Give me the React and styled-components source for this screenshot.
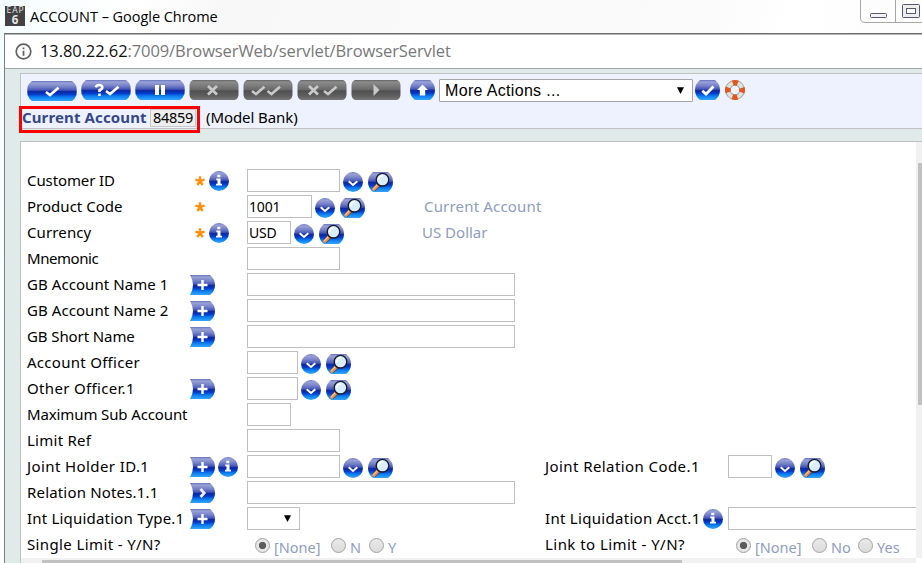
import React from "react";
import styled, { createGlobalStyle } from "styled-components";

const Global = createGlobalStyle`
  * { box-sizing: border-box; }
  html, body { margin: 0; padding: 0; overflow: hidden; }
  svg { display: block; flex: none; }
`;

const Window = styled.div`
  width: 922px;
  height: 563px;
  overflow: hidden;
  display: flex;
  flex-direction: column;
  background: linear-gradient(100deg, #f5fdfe 0, #ffffff 13%, #f8f8f8 22%, #fbfbfb 70%, #ffffff 78%, #fafafa 100%);
  font-family: "Noto Sans", "Open Sans", sans-serif;
  font-size: 15px;
  color: #000;
`;

const TitleBar = styled.header`
  height: 33px;
  flex: none;
  display: flex;
  align-items: flex-start;
  padding-left: 5px;
`;

const AppIcon = styled.div`
  width: 20px;
  height: 20px;
  margin-top: 6px;
  background: #424242;
  color: #e6e6e6;
  display: flex;
  flex-direction: column;
  align-items: center;
  font: 400 8.5px/8px "Open Sans", sans-serif;
  letter-spacing: 0.9px;
  padding-left: 1px;
`;

const AppIconDigit = styled.span`
  font-size: 11.5px;
  font-weight: 700;
  line-height: 12px;
`;

const Title = styled.div`
  margin: 6px auto 0 5px;
  font: 14.5px/22px "Open Sans", sans-serif;
  letter-spacing: -0.04px;
  white-space: nowrap;
`;

const Frame = styled.div`
  flex: 1;
  min-height: 0;
  margin-left: 4px;
  border-left: 1px solid #7c8080;
  border-top: 1px solid #6e6e6e;
  box-shadow: inset 0 1px 0 #b4b4b4;
  background: #e0eae8;
  display: flex;
  flex-direction: column;
`;

const AddressBar = styled.div`
  height: 34px;
  flex: none;
  margin-top: 1px;
  background: #fff;
  border-bottom: 1px solid #a3a6a6;
  display: flex;
  align-items: center;
  padding-left: 10px;
  gap: 8px;
`;

const Url = styled.div`
  font: 16.5px/24px "Open Sans", sans-serif;
  letter-spacing: -0.09px;
  color: #787878;
  white-space: nowrap;
  margin-bottom: 1px;
  b { font-weight: 400; color: #111; }
`;

const HeaderPanel = styled.section`
  margin: 4px 0 0 15px;
  height: 56px;
  flex: none;
  background: #eef2ff;
  border: solid #bfc1c4;
  border-width: 1px 0 1px 1px;
  display: flex;
  flex-direction: column;
`;

const Toolbar = styled.div`
  height: 33px;
  display: flex;
  align-items: flex-start;
  padding: 6px 0 0 6px;
`;

const ButtonGroup = styled.div`
  display: flex;
  gap: 4px;
  margin-right: 9px;
  & > :first-child { margin-top: 1px; }
`;

const ActionSelect = styled.div`
  width: 254px;
  height: 23px;
  margin: -1px 2px 0 4px;
  background: #fff;
  border: 1px solid #a5a5a5;
  border-radius: 1px;
  display: flex;
  align-items: center;
  justify-content: space-between;
  padding: 0 8px 0 5px;
  font: 16px/20px "Liberation Sans", sans-serif;
  letter-spacing: 0.33px;
`;

const HelpSlot = styled.div`
  margin-left: 5px;
`;

const RecordLine = styled.div`
  display: flex;
  align-items: center;
  height: 22px;
  margin-left: -2px;
`;

const Highlight = styled.div`
  height: 27px;
  width: 181px;
  flex: none;
  border: 3px solid #fa0000;
  display: flex;
  align-items: center;
  margin-top: 4px;
`;

const RecordType = styled.strong`
  width: 128px;
  color: #36488a;
  font-size: 15px;
  letter-spacing: 0.12px;
  line-height: 20px;
  white-space: nowrap;
  margin-top: -4px;
`;

const RecordId = styled.span`
  width: 46px;
  height: 18px;
  background: #eee;
  border: 1px solid #c9c9c9;
  font-size: 14.5px;
  letter-spacing: -0.3px;
  line-height: 15px;
  padding-left: 2px;
  margin-top: -3px;
`;

const Company = styled.span`
  margin: 0 0 0 6px;
  letter-spacing: -0.08px;
  line-height: 20px;
`;

const FormPanel = styled.section`
  margin: 12px 0 0 15px;
  flex: 1;
  min-height: 0;
  border: solid #bfc1c1;
  border-width: 1px 0 0 1px;
  background: #fff;
  display: grid;
  grid-template-columns: 1fr 6px;
  grid-template-rows: 1fr 5px;
`;

const Fields = styled.div`
  padding: 26px 0 0 6px;
  overflow: hidden;
`;

const VScroll = styled.div`
  background: #f1f1f1;
  padding: 21px 0 0 2px;
`;

const VThumb = styled.div`
  height: 242px;
  background: #c1c1c1;
`;

const HScroll = styled.div`
  background: #f1f1f1;
  padding: 2px 0 0 21px;
`;

const HThumb = styled.div`
  width: 640px;
  height: 3px;
  background: #c1c1c1;
`;

const Row = styled.div`
  height: 26px;
  display: grid;
  grid-template-columns: 163px 57px 298px 1fr;
  align-items: start;
`;

const Label = styled.span`
  line-height: 25px;
  white-space: nowrap;
  letter-spacing: ${(p) => p.$track || 0}px;
`;

const Marks = styled.div`
  display: flex;
  gap: 3px;
  padding-top: 3px;
`;

const StarSlot = styled.div`
  width: 16px;
  padding: 5px 0 0 5px;
`;

const Control = styled.div`
  display: flex;
  align-items: flex-start;
`;

const Box = styled.div`
  width: ${(p) => p.$w}px;
  height: 23px;
  flex: none;
  margin-top: 1px;
  border: 1px solid #bfbfbf;
  background: #fff;
  font-size: 14px;
  letter-spacing: -0.15px;
  line-height: 21px;
  padding-left: 1px;
`;

const Picker = styled(Box)`
  display: flex;
  align-items: center;
  justify-content: flex-end;
  padding-right: 8px;
`;

const Tools = styled.div`
  display: flex;
  gap: 5px;
  padding: 4px 0 0 3px;
`;

const Enrichment = styled.span`
  margin-left: ${(p) => p.$gap}px;
  letter-spacing: ${(p) => p.$track}px;
  line-height: 25px;
  color: #8e9dc0;
`;

const Side = styled.div`
  display: grid;
  grid-template-columns: 158px 25px 1fr;
`;

const Radios = styled.div`
  display: flex;
  padding: 5px 0 0 8px;
`;

const Choice = styled.label`
  display: flex;
  gap: 4px;
  width: ${(p) => p.$w}px;
  flex: none;
  color: #8e9dc0;
  font-size: 14.5px;
  line-height: 20px;
  white-space: nowrap;
`;

const Dot = styled.span`
  width: 15px;
  height: 15px;
  margin-top: 1px;
  flex: none;
  border: 1px solid #a2a2a2;
  border-radius: 50%;
  background: ${(p) =>
    p.$on
      ? "radial-gradient(circle, #5b5b5b 0 3.3px, #e6e6e6 4px)"
      : "linear-gradient(#e9e9e9, #dcdcdc)"};
`;

const stops = {
  blue: [["0", "#6573bf"], ["0.1", "#9aa2d6"], ["0.3", "#7480c8"], ["0.46", "#4454b6"], ["0.53", "#0a289f"], ["0.66", "#0538c8"], ["0.8", "#0a7cf0"], ["1", "#35a6fa"]],
  grey: [["0", "#636363"], ["0.1", "#8c8c8c"], ["0.48", "#6a6a6a"], ["0.54", "#505050"], ["0.8", "#5f5f5f"], ["1", "#787878"]],
};

function Shaded({ w, d, tone = "blue", children }) {
  const id = React.useId();
  return (
    <svg width={w} height="20" viewBox={`0 0 ${w} 20`}>
      <defs>
        <linearGradient id={id} x1="0" y1="0" x2="0" y2="20" gradientUnits="userSpaceOnUse">
          {stops[tone].map(([o, c]) => <stop key={o} offset={o} stopColor={c} />)}
        </linearGradient>
      </defs>
      <path d={d} fill={`url(#${id})`} />
      {children}
    </svg>
  );
}

const PILL = "M5 0H45Q48 2 49.5 6Q50 10 49.5 14Q48 18 45 20H5Q2 18 .5 14Q0 10 .5 6Q2 2 5 0Z";
const GREY_PILL = "M4 0H46Q49 1 49.5 5V15Q49 19 46 20H4Q1 19 .5 15V5Q1 1 4 0Z";
const SMALL = "M5 0H20Q25 4 25 10Q25 16 20 20H5Q0 16 0 10Q0 4 5 0Z";
const DISC = "M10 0A10 10 0 0 1 10 20A10 10 0 0 1 10 0Z";
const TAG = "M0 0H20Q25 4 25 10Q25 16 20 20H0Q3 15 3 10Q3 5 0 0Z";

const Tick = ({ x = 18, c = "#fff" }) => (
  <path d={`M${x} 11L${x + 4} 14L${x + 12.5} 6.7`} fill="none" stroke={c} strokeWidth="2.6" />
);
const Cross = ({ x, c = "#c9c9c9" }) => (
  <path d={`M${x} 6L${x + 9} 14.5M${x + 9} 6L${x} 14.5`} stroke={c} strokeWidth="2.8" />
);

const glyphs = {
  commit: <Tick x={19} />,
  validate: (
    <>
      <path d="M14.8 7.4Q15.5 5 18 5Q21.3 5 21.3 7.4Q21.3 9 18.5 10.2V12M18.5 13.5V16" fill="none" stroke="#fff" strokeWidth="2.6" />
      <Tick x={25} />
    </>
  ),
  hold: <path d="M20 5H24V15H20ZM26 5H30V15H26Z" fill="#fff" />,
  remove: <Cross x={19} />,
  authorise: <><Tick x={9} c="#c9c9c9" /><Tick x={24.5} c="#c9c9c9" /></>,
  reverse: <><Cross x={12} /><Tick x={27} c="#c9c9c9" /></>,
  next: <path d="M22.5 4L28.5 10L22.5 16Z" fill="#c9c9c9" />,
};

const Pill = ({ kind, grey }) => (
  <Shaded w={50} d={grey ? GREY_PILL : PILL} tone={grey ? "grey" : "blue"}>{glyphs[kind]}</Shaded>
);
const Up = () => (
  <Shaded w={25} d={SMALL}><path d="M12.5 4.5L18 10H15.2V15.5H9.8V10H7Z" fill="#fff" /></Shaded>
);
const Go = () => (
  <Shaded w={25} d={SMALL}><path d="M7.3 10.8L11 14L18.5 6.4" fill="none" stroke="#fff" strokeWidth="2.8" /></Shaded>
);
const Info = () => (
  <Shaded w={20} d={DISC}>
    <path d="M8.3 3.8H11.3V6.3H8.3ZM7.3 7.6H11.5V12.8H13V14.5H7V12.8H8.5V9.2H7.3Z" fill="#fff" />
  </Shaded>
);
const Drop = () => (
  <Shaded w={20} d={DISC}><path d="M5.7 9.2L10 13L14.3 9.2" fill="none" stroke="#fff" strokeWidth="2" /></Shaded>
);
const Search = () => (
  <Shaded w={25} d={SMALL}>
    <path d="M10.5 12.4L5.5 17.8" stroke="#5a3a28" strokeWidth="4.4" />
    <path d="M9.9 13L5 18.2" stroke="#e8935c" strokeWidth="3.4" />
    <path d="M9.2 12.8L5 17.3" stroke="#ffd0a8" strokeWidth="1" />
    <circle cx="14.5" cy="7.7" r="6.3" fill="#d9edfb" stroke="#171b29" strokeWidth="1.4" />
    <path d="M10.6 8.3Q10.7 4.2 14.9 3.5" stroke="#fff" strokeWidth="1.6" fill="none" />
  </Shaded>
);
const Add = () => (
  <Shaded w={25} d={TAG}><path d="M11.3 5H13.7V8.8H17.5V11.2H13.7V15H11.3V11.2H7.5V8.8H11.3Z" fill="#fff" /></Shaded>
);
const Sub = () => (
  <Shaded w={25} d={TAG}><path d="M10.5 6L14.2 10L10.5 14" fill="none" stroke="#e9edff" strokeWidth="2.8" /></Shaded>
);
const Star = () => (
  <svg width="10" height="10" viewBox="0 0 10 10">
    <path d="M5 .3V5L.4 3.7M5 5L9.6 3.7M5 5L2.3 9M5 5L7.7 9" fill="none" stroke="#ff9010" strokeWidth="2.4" />
  </svg>
);
const Caret = () => (
  <svg width="7" height="7" viewBox="0 0 7 7"><path d="M0 .2H7L3.5 7Z" fill="#000" /></svg>
);
const Lifebuoy = () => (
  <svg width="20" height="20" viewBox="0 0 20 20">
    <circle cx="10" cy="10" r="7.2" fill="none" stroke="#a3a29c" strokeWidth="5.6" />
    <circle cx="10" cy="10" r="7.2" fill="none" stroke="#e2e2dc" strokeWidth="3.8" />
    <circle cx="10" cy="10" r="7.2" fill="none" stroke="#e2571e" strokeWidth="5.6" strokeDasharray="5 6.31" strokeDashoffset="2.5" />
  </svg>
);
const WindowButtons = () => (
  <svg width="62" height="24" viewBox="0 0 62 24">
    <path d="M.5 0V18Q.5 22.5 5 22.5H62M35.5 0V22" fill="none" stroke="#a7a7a7" />
    <rect x="10.5" y="13.5" width="16" height="4" rx="1" fill="#f2f2f2" stroke="#55586e" />
    <rect x="42.5" y="4.5" width="17" height="13" rx="1" fill="#eee" stroke="#55586e" />
    <rect x="46.5" y="8.5" width="9" height="5" fill="#fff" stroke="#55586e" />
  </svg>
);

const Lookup = () => <Tools><Drop /><Search /></Tools>;

const marks = {
  required: <><StarSlot><Star /></StarSlot><Info /></>,
  star: <StarSlot><Star /></StarSlot>,
  add: <Add />,
  addInfo: <><Add /><Info /></>,
  sub: <Sub />,
};

const rows = [
  { label: "Customer ID", track: -0.1, mark: "required", w: 93, lookup: true },
  { label: "Product Code", track: 0.02, mark: "star", w: 65, value: "1001", lookup: true, note: "Current Account", gap: 59, noteTrack: 0.18 },
  { label: "Currency", track: 0.12, mark: "required", w: 44, value: "USD", lookup: true, note: "US Dollar", gap: 78 },
  { label: "Mnemonic", track: -0.45, w: 93 },
  { label: "GB Account Name 1", track: 0.07, mark: "add", w: 268 },
  { label: "GB Account Name 2", track: 0.07, mark: "add", w: 268 },
  { label: "GB Short Name", track: -0.1, mark: "add", w: 268 },
  { label: "Account Officer", track: 0.28, w: 51, lookup: true },
  { label: "Other Officer.1", track: 0.33, mark: "add", w: 51, lookup: true },
  { label: "Maximum Sub Account", track: -0.12, w: 44 },
  { label: "Limit Ref", track: 0.25, w: 93 },
  {
    label: "Joint Holder ID.1", track: 0.4, mark: "addInfo", w: 93, lookup: true,
    side: { label: "Joint Relation Code.1", track: 0.42, w: 44, lookup: true },
  },
  { label: "Relation Notes.1.1", track: 0.17, mark: "sub", w: 268 },
  {
    label: "Int Liquidation Type.1", track: 0.2, mark: "add", w: 53, select: true,
    side: { label: "Int Liquidation Acct.1", track: 0.3, info: true, w: 268 },
  },
  {
    label: "Single Limit - Y/N?", track: 0.38, choices: [["[None]", 76], ["N", 38], ["Y", 40]],
    side: { label: "Link to Limit - Y/N?", track: 0.45, choices: [["[None]", 76], ["No", 46], ["Yes", 50]] },
  },
];

function Input({ f }) {
  if (f.choices) {
    return (
      <Radios>
        {f.choices.map(([text, w], i) => (
          <Choice key={text} $w={w}><Dot $on={i === 0} />{text}</Choice>
        ))}
      </Radios>
    );
  }
  return (
    <Control>
      {f.select ? <Picker $w={f.w}><Caret /></Picker> : <Box $w={f.w}>{f.value}</Box>}
      {f.lookup && <Lookup />}
      {f.note && <Enrichment $gap={f.gap} $track={f.noteTrack || 0}>{f.note}</Enrichment>}
    </Control>
  );
}

export default function App() {
  return (
    <Window>
      <Global />
      <TitleBar>
        <AppIcon>EAP<AppIconDigit>6</AppIconDigit></AppIcon>
        <Title>ACCOUNT – Google Chrome</Title>
        <WindowButtons />
      </TitleBar>
      <Frame>
        <AddressBar>
          <svg width="17" height="17" viewBox="0 0 17 17">
            <circle cx="8.5" cy="8.5" r="7.3" fill="none" stroke="#616161" strokeWidth="1.7" />
            <path d="M7.6 4.4H9.4V6.2H7.6ZM7.6 7.7H9.4V12.8H7.6Z" fill="#616161" />
          </svg>
          <Url><b>13.80.22.62</b>:7009/BrowserWeb/servlet/BrowserServlet</Url>
        </AddressBar>
        <HeaderPanel>
          <Toolbar>
            <ButtonGroup>
              <Pill kind="commit" />
              <Pill kind="validate" />
              <Pill kind="hold" />
              <Pill kind="remove" grey />
              <Pill kind="authorise" grey />
              <Pill kind="reverse" grey />
              <Pill kind="next" grey />
            </ButtonGroup>
            <Up />
            <ActionSelect>More Actions ...<Caret /></ActionSelect>
            <Go />
            <HelpSlot><Lifebuoy /></HelpSlot>
          </Toolbar>
          <RecordLine>
            <Highlight>
              <RecordType>Current Account</RecordType>
              <RecordId>84859</RecordId>
            </Highlight>
            <Company>(Model Bank)</Company>
          </RecordLine>
        </HeaderPanel>
        <FormPanel>
          <Fields>
            {rows.map((r) => (
              <Row key={r.label}>
                <Label $track={r.track}>{r.label}</Label>
                <Marks>{marks[r.mark]}</Marks>
                <Input f={r} />
                {r.side && (
                  <Side>
                    <Label $track={r.side.track}>{r.side.label}</Label>
                    <Marks>{r.side.info && <Info />}</Marks>
                    <Input f={r.side} />
                  </Side>
                )}
              </Row>
            ))}
          </Fields>
          <VScroll><VThumb /></VScroll>
          <HScroll><HThumb /></HScroll>
        </FormPanel>
      </Frame>
    </Window>
  );
}
